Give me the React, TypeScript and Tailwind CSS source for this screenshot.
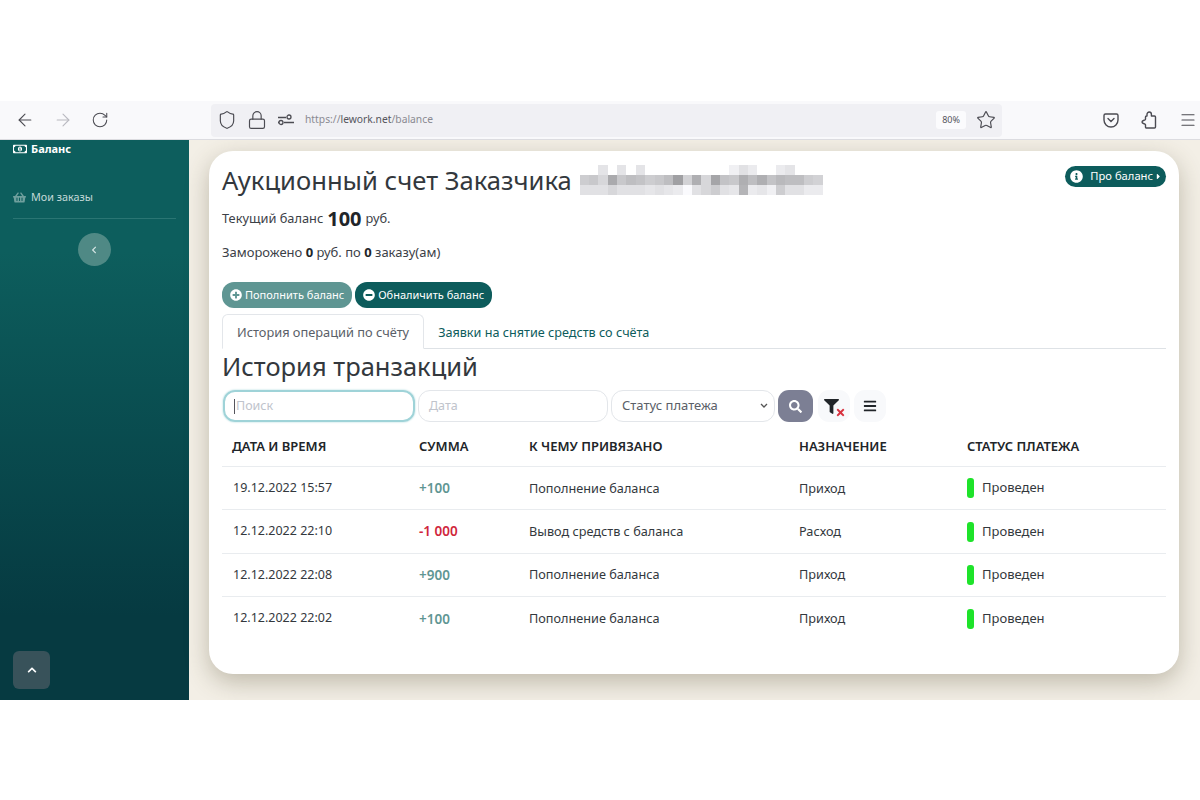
import { ArrowLeft, ArrowRight, Lock, Menu, RotateCw, Shield, Star } from "lucide-react";
import {
  FaBars,
  FaCaretRight,
  FaChevronLeft,
  FaChevronUp,
  FaFilter,
  FaInfoCircle,
  FaMinusCircle,
  FaPlusCircle,
  FaRegMoneyBillAlt,
  FaSearch,
  FaShoppingBasket,
  FaTimes,
} from "react-icons/fa";

const transactions = [
  { date: "19.12.2022 15:57", sum: "+100", income: true, target: "Пополнение баланса", purpose: "Приход" },
  { date: "12.12.2022 22:10", sum: "-1 000", income: false, target: "Вывод средств с баланса", purpose: "Расход" },
  { date: "12.12.2022 22:08", sum: "+900", income: true, target: "Пополнение баланса", purpose: "Приход" },
  { date: "12.12.2022 22:02", sum: "+100", income: true, target: "Пополнение баланса", purpose: "Приход" },
];

// Censored e-mail next to the title, one grey level per mosaic cell
const mosaic = [
  [255, 255, 228, 255, 228, 255, 228, 255, 255, 255, 255, 255, 255, 255, 255, 255, 240, 225, 235, 255, 255, 235, 228, 255, 255, 255],
  [205, 200, 215, 170, 200, 190, 195, 205, 200, 190, 160, 210, 175, 215, 165, 195, 200, 175, 190, 175, 195, 185, 190, 190, 205, 210],
  [225, 225, 225, 215, 225, 225, 225, 230, 225, 230, 235, 250, 225, 215, 205, 225, 230, 180, 235, 230, 240, 205, 225, 225, 235, 235],
];

function PermissionsIcon() {
  return (
    <svg width="16" height="12" viewBox="0 0 16 12" fill="none" stroke="#4b4b52" strokeWidth="1.3">
      <path d="M0 3.500h8M0 8.500h1M6 8.500h10" />
      <circle cx="11" cy="3" r="2" />
      <circle cx="3" cy="8.500" r="2" />
    </svg>
  );
}

function PocketIcon() {
  return (
    <svg width="16" height="15" viewBox="0 0 16 15" fill="none" stroke="#4b4b52" strokeWidth="1.4">
      <path d="M2.500 1h11A1.500 1.500 0 0 1 15 2.500V7a7 7 0 0 1-14 0V2.500A1.500 1.500 0 0 1 2.500 1Z" />
      <path d="M5 5.500l3 3 3-3" strokeLinecap="round" />
    </svg>
  );
}

function ExtensionsIcon() {
  return (
    <svg width="16" height="18" viewBox="0 0 16 18" fill="none" stroke="#4b4b52" strokeWidth="1.4" strokeLinejoin="round">
      <path d="M6 5V3.200a2.200 2.200 0 0 1 4.400 0V5h3.100a1 1 0 0 1 1 1v10a1 1 0 0 1-1 1H5.500a1 1 0 0 1-1-1v-2.200c0-1.400-3.500-.6-3.500-2.800s3.500-1.400 3.500-2.800V6a1 1 0 0 1 1-1Z" />
    </svg>
  );
}

function BrowserBar() {
  return (
    <div className="flex h-[39px] shrink-0 items-center border-b border-[#dcdce0] bg-[#f9f9fb] text-[#4b4b52]">
      <div className="flex w-[211px] items-center gap-[18px] pl-[15px]">
        <ArrowLeft size={20} strokeWidth={1.3} />
        <ArrowRight size={20} strokeWidth={1.3} className="text-[#b9b9c0]" />
        <RotateCw size={18} strokeWidth={1.4} />
      </div>
      <div className="flex h-[33px] w-[791px] items-center rounded-[4px] bg-[#f0f0f4] pl-[6px] pr-[6px]">
        <Shield size={20} strokeWidth={1.4} />
        <Lock size={20} strokeWidth={1.4} className="ml-[10px]" />
        <span className="ml-[11px] flex">
          <PermissionsIcon />
        </span>
        <span className="ml-[11px] text-[10.300px] text-[#8a8a92]">
          https://<span className="text-[#55555c]">lework.net</span>/balance
        </span>
        <span className="ml-auto rounded-[3px] bg-[#fbfbfd] px-[6px] py-[2px] text-[9px] text-[#55555c]">80%</span>
        <Star size={20} strokeWidth={1.4} className="ml-[10px]" />
      </div>
      <div className="ml-auto flex items-center gap-[22px] pr-[3px]">
        <PocketIcon />
        <ExtensionsIcon />
        <Menu size={18} strokeWidth={1.6} />
      </div>
    </div>
  );
}

function Sidebar() {
  return (
    <aside className="flex w-[189px] shrink-0 flex-col overflow-hidden bg-gradient-to-b from-[#0d5e5d] from-[20%] to-[#063a41] to-[85%] px-[13px] text-white">
      <div className="flex h-[18px] items-center gap-[4px] text-[11px] font-bold">
        <FaRegMoneyBillAlt size={14} />
        Баланс
      </div>
      <div className="mt-[29px] flex h-[20px] items-center gap-[5px] text-[10.800px] text-[#c3d9d8]">
        <FaShoppingBasket size={13} className="text-[#6f9f9d]" />
        Мои заказы
      </div>
      <div className="mt-[11px] border-t border-[#2a7573]" />
      <button className="mx-auto mt-[14px] flex size-[33px] items-center justify-center rounded-full bg-[#4f8985] text-[#d5e5e4]">
        <FaChevronLeft size={8} className="translate-x-[-1px]" />
      </button>
      <button className="mb-[11px] mt-auto flex h-[38px] w-[37px] items-center justify-center rounded-[6px] bg-[#38525a] text-white">
        <FaChevronUp size={10} />
      </button>
    </aside>
  );
}

function Mosaic() {
  return (
    <div className="ml-[8px] flex flex-col blur-[0.5px]">
      {mosaic.map((row, y) => (
        <div key={y} className="flex">
          {row.map((level, x) => (
            <div
              key={x}
              className="h-[10px] w-[9.350px]"
              style={{ backgroundColor: `rgb(${level},${level},${level + 3 > 255 ? 255 : level + 3})` }}
            />
          ))}
        </div>
      ))}
    </div>
  );
}

function Filters() {
  return (
    <div className="mt-[7px] flex items-center">
      <div className="ml-[1px] flex h-[32px] w-[192px] items-center rounded-[12px] border-2 border-[#9fd3d8] pl-[9px] text-[12.500px] text-[#c0c4cc] shadow-[0_0_2px_#9fd3d8]">
        <span className="mr-[1px] h-[15px] w-px bg-[#55555c]" />
        Поиск
      </div>
      <div className="ml-[3px] flex h-[32px] w-[190px] items-center rounded-[12px] border border-[#e3e6ea] pl-[10px] text-[12.500px] text-[#c0c4cc]">
        Дата
      </div>
      <div className="ml-[3px] flex h-[32px] w-[164px] items-center justify-between rounded-[12px] border border-[#e3e6ea] pl-[10px] pr-[6px] text-[13px] text-[#5a6068]">
        Статус платежа
        <svg width="8" height="6" viewBox="0 0 8 6" fill="none" stroke="#555" strokeWidth="1.3">
          <path d="M1 1l3 3 3-3" />
        </svg>
      </div>
      <button className="ml-[3px] flex h-[32px] w-[35px] items-center justify-center rounded-[11px] bg-[#7c7f94] text-white">
        <FaSearch size={13} />
      </button>
      <button className="relative ml-[5px] flex size-[32px] items-center justify-center rounded-[11px] bg-[#f8f9fb] text-[#212529]">
        <FaFilter size={15} className="translate-x-[-3px]" />
        <FaTimes size={11} className="absolute bottom-[4px] right-[4px] text-[#d8323f]" />
      </button>
      <button className="ml-[4px] flex size-[32px] items-center justify-center rounded-[11px] bg-[#f8f9fb] text-[#212529]">
        <FaBars size={14} />
      </button>
    </div>
  );
}

function TransactionsTable() {
  return (
    <div>
      <div className="grid h-[39px] grid-cols-[187px_110px_270px_168px_1fr] items-center border-b border-[#e9ecef] pl-[10px] text-[13px] font-semibold text-[#212529]">
        <div>ДАТА И ВРЕМЯ</div>
        <div>СУММА</div>
        <div>К ЧЕМУ ПРИВЯЗАНО</div>
        <div>НАЗНАЧЕНИЕ</div>
        <div>СТАТУС ПЛАТЕЖА</div>
      </div>
      {transactions.map((row, i) => (
        <div
          key={row.date}
          className={`grid h-[43.400px] grid-cols-[186px_110px_270px_168px_1fr] items-center pl-[11px] text-[12.700px] text-[#33383d] ${
            i < transactions.length - 1 ? "border-b border-[#e9ecef]" : ""
          }`}
        >
          <div className="text-[12.500px]">{row.date}</div>
          <div className={row.income ? "text-[13.500px] font-semibold text-[#5f9693]" : "text-[13.500px] font-semibold text-[#d0263c]"}>
            {row.sum}
          </div>
          <div>{row.target}</div>
          <div>{row.purpose}</div>
          <div className="flex items-center gap-[8px] text-[13px]">
            <span className="h-[20px] w-[7px] rounded-[3px] bg-[#1ee32a]" />
            Проведен
          </div>
        </div>
      ))}
    </div>
  );
}

function BalanceCard() {
  return (
    <section className="flex h-[523px] w-[970px] flex-col rounded-[24px] bg-white pl-[13px] pr-[13px] shadow-[0_8px_24px_rgba(80,70,45,0.32)]">
      <div className="mt-[14px] flex items-start">
        <h1 className="text-[25.600px] leading-[32px] text-[#33383d]">Аукционный счет Заказчика</h1>
        <Mosaic />
        <a className="ml-auto mt-[1px] flex h-[21px] items-center gap-[1px] rounded-full bg-[#0d5c5c] pl-[5px] pr-[3px] text-[11.200px] text-white">
          <FaInfoCircle size={13} className="mr-[6px]" />
          Про баланс
          <FaCaretRight size={9} />
        </a>
      </div>
      <p className="mt-[8px] flex h-[28px] items-center text-[12.800px] text-[#3c4147]">
        Текущий баланс <b className="mx-[4px] text-[20px] font-bold text-[#212529]">100</b> руб.
      </p>
      <p className="mt-[10px] h-[18px] text-[13px] leading-[18px] text-[#3c4147]">
        Заморожено <b className="text-[#212529]">0</b> руб. по <b className="text-[#212529]">0</b> заказу(ам)
      </p>
      <div className="mt-[21px] flex gap-[3px] text-[11px] text-white">
        <button className="flex h-[26px] items-center gap-[3px] rounded-[12px] bg-[#5f9693] px-[8px]">
          <FaPlusCircle size={12} />
          Пополнить баланс
        </button>
        <button className="flex h-[26px] items-center gap-[3px] rounded-[12px] bg-[#0d5c5c] px-[8px]">
          <FaMinusCircle size={12} />
          Обналичить баланс
        </button>
      </div>
      <div className="mt-[6px] flex h-[35px] border-b border-[#dee2e6] text-[12.800px]">
        <div className="-mb-px flex items-center rounded-t-[6px] border border-b-white border-[#e3e6ea] bg-white px-[14px] pt-[3px] text-[#5a6068]">
          История операций по счёту
        </div>
        <div className="flex items-center px-[14px] pt-[3px] text-[12.650px] text-[#0d5c5c]">
          Заявки на снятие средств со счёта
        </div>
      </div>
      <h2 className="text-[25.500px] leading-[34px] text-[#33383d]">История транзакций</h2>
      <Filters />
      <div className="mt-[6px]">
        <TransactionsTable />
      </div>
    </section>
  );
}

export default function App() {
  return (
    <div className="flex h-[800px] flex-col bg-white pt-[101px] font-['Noto_Sans','Open_Sans',sans-serif]">
      <BrowserBar />
      <div className="flex h-[560px] overflow-hidden">
        <Sidebar />
        <main className="flex-1 bg-[#f3efe6] pl-[20px] pt-[11px]">
          <BalanceCard />
        </main>
      </div>
      <div className="flex-1 bg-white" />
    </div>
  );
}
